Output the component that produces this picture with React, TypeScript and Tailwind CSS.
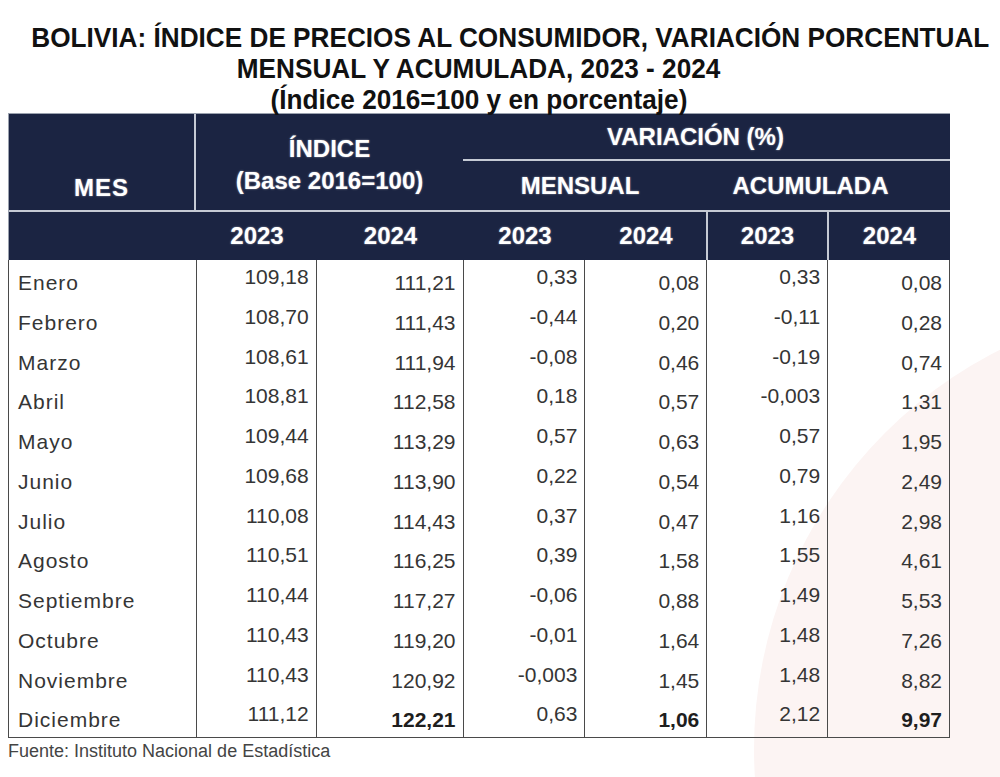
const rows: string[][] = [
  ["Enero", "109,18", "111,21", "0,33", "0,08", "0,33", "0,08"],
  ["Febrero", "108,70", "111,43", "-0,44", "0,20", "-0,11", "0,28"],
  ["Marzo", "108,61", "111,94", "-0,08", "0,46", "-0,19", "0,74"],
  ["Abril", "108,81", "112,58", "0,18", "0,57", "-0,003", "1,31"],
  ["Mayo", "109,44", "113,29", "0,57", "0,63", "0,57", "1,95"],
  ["Junio", "109,68", "113,90", "0,22", "0,54", "0,79", "2,49"],
  ["Julio", "110,08", "114,43", "0,37", "0,47", "1,16", "2,98"],
  ["Agosto", "110,51", "116,25", "0,39", "1,58", "1,55", "4,61"],
  ["Septiembre", "110,44", "117,27", "-0,06", "0,88", "1,49", "5,53"],
  ["Octubre", "110,43", "119,20", "-0,01", "1,64", "1,48", "7,26"],
  ["Noviembre", "110,43", "120,92", "-0,003", "1,45", "1,48", "8,82"],
  ["Diciembre", "111,12", "122,21", "0,63", "1,06", "2,12", "9,97"],
];

// column widths incl. right border, table runs x=8..950
const widths = ["w-[188px]", "w-[120px]", "w-[147px]", "w-[122px]", "w-[122px]", "w-[121px]", "w-[122px]"];

const glow = "[text-shadow:0_0_2px_rgba(255,255,255,0.55)]";

export default function App() {
  return (
    <div className="relative w-[1000px] h-[777px] overflow-hidden bg-white font-['Liberation_Sans',Arial,sans-serif]">
      {/* faint background swoosh */}
      <div className="absolute left-[754px] top-[302px] w-[894px] h-[894px] rounded-full bg-[#fcf4f3]" />

      <div className="relative">
        {/* title */}
        <div className="h-[113px] pt-[22px] font-bold text-[28px] leading-[31px] text-[#111] whitespace-nowrap">
          <div className="flex justify-center pl-[62px] w-[942px] ml-[8px]">
            <span className="inline-block scale-x-[0.935]">BOLIVIA: ÍNDICE DE PRECIOS AL CONSUMIDOR, VARIACIÓN PORCENTUAL</span>
          </div>
          <div className="flex justify-center w-[942px] ml-[8px]">
            <span className="inline-block scale-x-[0.935]">MENSUAL Y ACUMULADA, 2023 - 2024</span>
          </div>
          <div className="flex justify-center w-[942px] ml-[8px]">
            <span className="inline-block scale-x-[0.935]">(Índice 2016=100 y en porcentaje)</span>
          </div>
        </div>

        <div className="ml-[8px] w-[942px]">
          {/* header */}
          <div className={`bg-[#1b2442] border-t border-l border-[#9aa1ae] text-white font-bold text-[24px] ${glow}`}>
            <div className="flex h-[96px]">
              <div className="w-[187px] border-r-2 border-[#c5cad4] flex justify-center pt-[60px] leading-[28px] tracking-[1px]">MES</div>
              <div className="w-[267px] flex flex-col items-center pt-[19px] leading-[32px]">
                <span>ÍNDICE</span>
                <span>(Base 2016=100)</span>
              </div>
              <div className="flex-1 flex flex-col">
                <div className="h-[47px] border-b-2 border-[#c5cad4] flex items-center justify-center pr-[22px]">VARIACIÓN (%)</div>
                <div className="flex flex-1">
                  <div className="w-[244px] flex items-center justify-center pr-[10px]">MENSUAL</div>
                  <div className="flex-1 flex items-center justify-center pr-[36px]">ACUMULADA</div>
                </div>
              </div>
            </div>
            <div className="h-[2px] bg-[#c5cad4]" />
            <div className="flex h-[48px] items-center">
              <div className="w-[188px]" />
              <div className="w-[120px] text-center">2023</div>
              <div className="w-[147px] text-center">2024</div>
              <div className="w-[122px] text-center">2023</div>
              <div className="w-[122px] text-center self-stretch flex items-center justify-center border-r-2 border-[#c5cad4]">2024</div>
              <div className="w-[121px] text-center self-stretch flex items-center justify-center border-r-2 border-[#c5cad4]">2023</div>
              <div className="w-[121px] text-center">2024</div>
            </div>
          </div>

          {/* body */}
          <div className="border-l border-b border-[#4a4a4a] text-[21px] leading-[24px] text-[#353535]">
            {rows.map((r, i) => {
              const last = i === rows.length - 1;
              return (
                <div key={r[0]} className="flex h-[39.75px]">
                  {r.map((v, j) => {
                    const y2023 = j === 1 || j === 3 || j === 5;
                    const bold = last && (j === 2 || j === 4 || j === 6);
                    return (
                      <div
                        key={j}
                        className={`${widths[j]} border-r border-[#4a4a4a] ${
                          j === 0 ? "pl-[9px] text-left tracking-[1px]" : "pr-[7px] text-right"
                        } ${y2023 ? "pt-[5px]" : "pt-[11px]"} ${bold ? "font-bold text-[#1e1e1e]" : ""}`}
                      >
                        {v}
                      </div>
                    );
                  })}
                </div>
              );
            })}
          </div>

          <div className="mt-[3px] text-[18px] leading-[20px] text-[#444]">Fuente: Instituto Nacional de Estadística</div>
        </div>
      </div>
    </div>
  );
}
